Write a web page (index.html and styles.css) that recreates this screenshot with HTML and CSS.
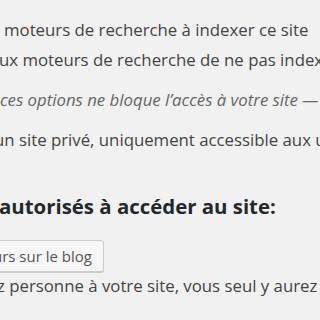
FILE: index.html
```html
<!DOCTYPE html>
<html lang="fr">
<head>
  <meta charset="UTF-8" />
  <meta name="viewport" content="width=device-width, initial-scale=1.0"/>
  <title>Confidentialité</title>
  <link rel="stylesheet" href="styles.css">
</head>
<body>
  <div class="settings">
    <fieldset class="privacy">
      <label class="opt opt-first">moteurs de recherche à indexer ce site</label>
      <label class="opt opt-second">ux moteurs de recherche de ne pas indexer ce site</label>
      <p class="note">ces options ne bloque l’accès à votre site — c’est aux moteurs de décider</p>
      <label class="opt opt-private">un site privé, uniquement accessible aux utilisateurs choisis</label>
    </fieldset>

    <h3 class="users-title">autorisés à accéder au site:</h3>
    <button type="button" class="button">urs sur le blog</button>
    <p class="description">z personne à votre site, vous seul y aurez accès.</p>
  </div>
</body>
</html>
```

FILE: styles.css
```css
body {
  margin: 0;
  background: #f1f1f1;
  font-family: 'Open Sans', sans-serif;
  color: #444;
  overflow: hidden;
}
.settings {
  padding-top: 18px;
  white-space: nowrap;
}
.privacy {
  border: none;
  margin: 0;
  padding: 0;
}
.opt {
  display: block;
  font-size: 16.8px;
  line-height: 24px;
}
.opt-first {
  margin-left: 4px;
}
.opt-second {
  margin-top: 6px;
  margin-left: -1px;
}
.note {
  margin: 16px 0 0 0;
  font-size: 16.8px;
  line-height: 24px;
  font-style: italic;
  color: #666;
}
.opt-private {
  margin-top: 16px;
  margin-left: -6px;
}
.users-title {
  margin: 41px 0 0 -1px;
  font-size: 20.4px;
  line-height: 26px;
  font-weight: 700;
  color: #23282d;
}
.button {
  display: block;
  margin: 21px 0 0 -20px;
  padding: 0 11px 0 12px;
  height: 32px;
  font-family: 'Open Sans', sans-serif;
  font-size: 15px;
  line-height: 30px;
  color: #555;
  background: #f7f7f7;
  border: 1px solid #ccc;
  border-radius: 3px;
  box-shadow: 0 1px 0 #ccc;
}
.description {
  margin: 2px 0 0 -3px;
  font-size: 16.8px;
  line-height: 24px;
}
```
